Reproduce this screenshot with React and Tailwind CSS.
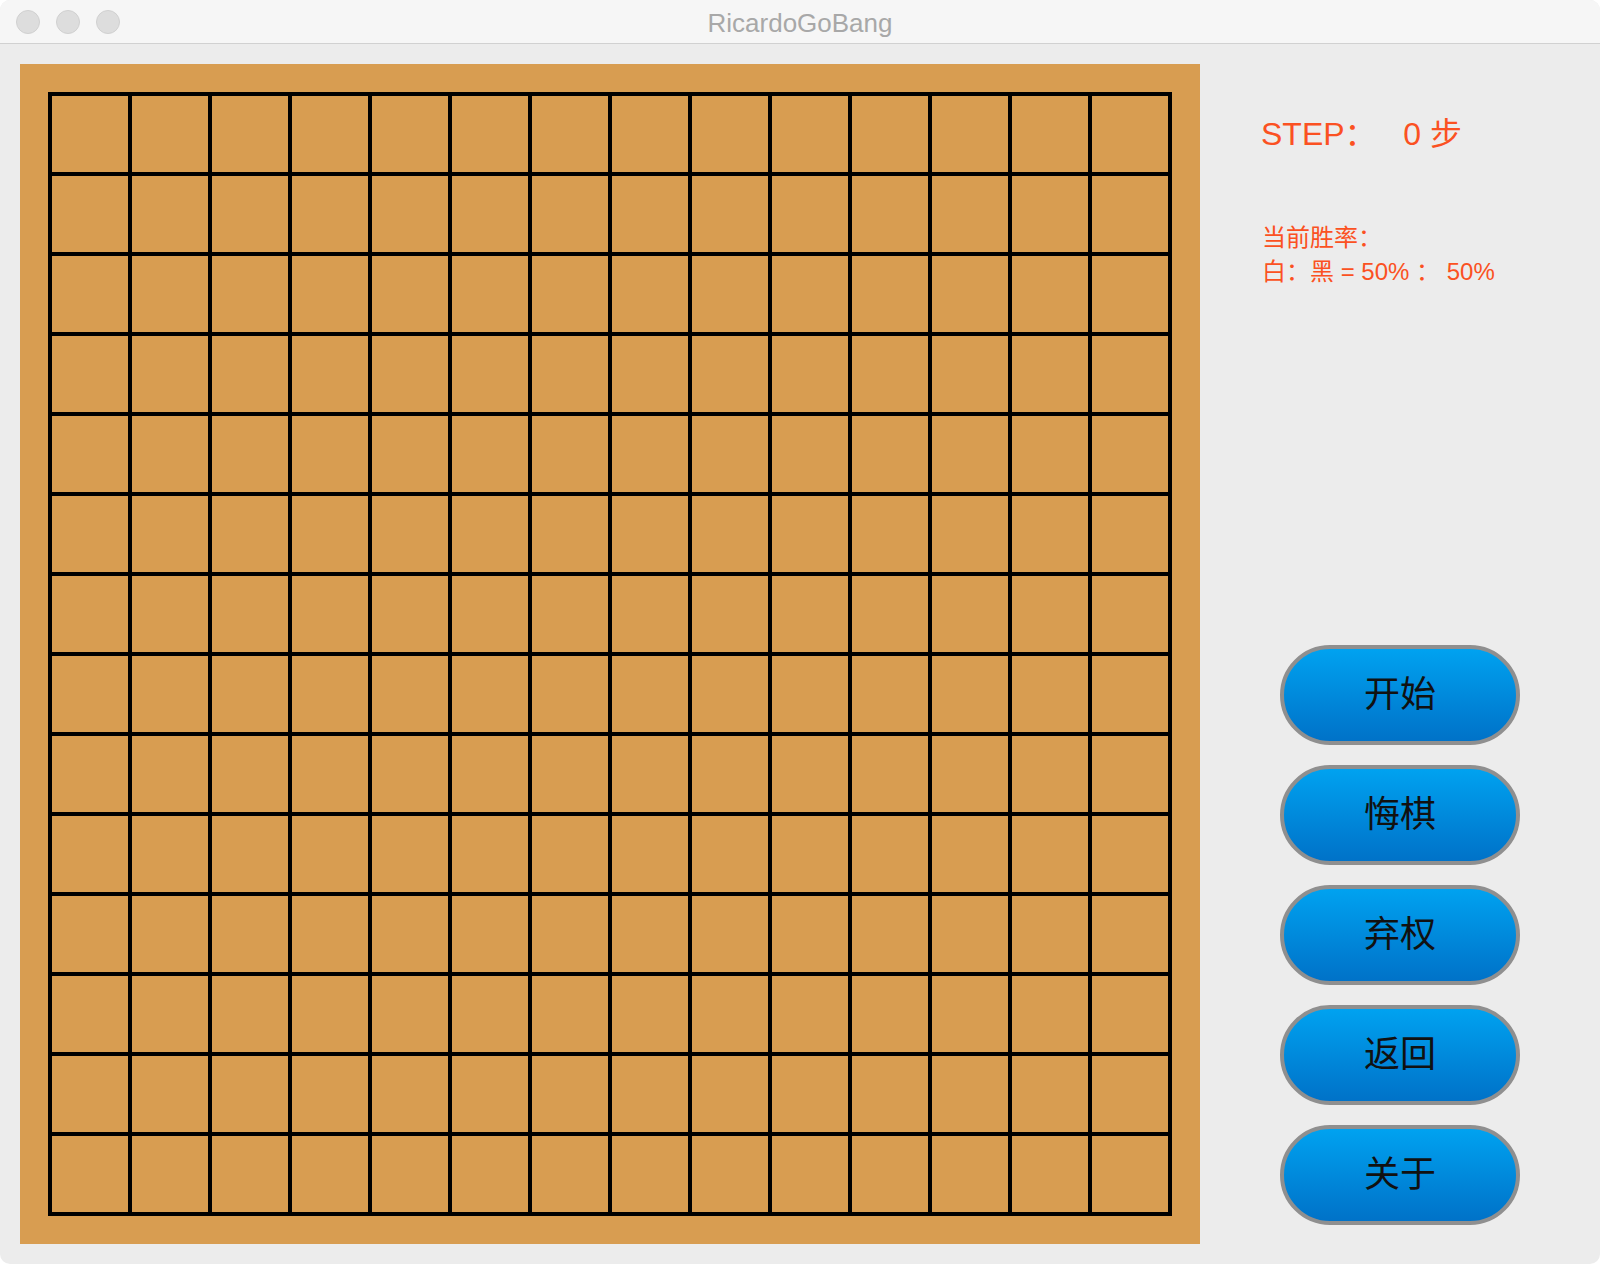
const CELLS = Array.from({ length: 14 * 14 });
const BUTTONS = ["开始", "悔棋", "弃权", "返回", "关于"];

export default function App() {
  return (
    <div className="h-[1264px] w-[1600px] bg-white font-['Liberation_Sans','Noto_Sans_CJK_SC',sans-serif]">
      <div className="flex h-full w-full flex-col overflow-hidden rounded-[10px] bg-[#ececec]">
        <TitleBar />
        <div className="flex flex-1">
          <Board />
          <SidePanel />
        </div>
      </div>
    </div>
  );
}

function TitleBar() {
  return (
    <div className="relative flex h-[44px] shrink-0 items-center justify-center border-b border-[#d1d1d1] bg-[#f6f6f6] pt-[3px]">
      <div className="absolute left-[16px] top-[10px] flex gap-[16px]">
        <span className="h-[24px] w-[24px] rounded-full border border-[#d0d0d0] bg-[#dddddd]" />
        <span className="h-[24px] w-[24px] rounded-full border border-[#d0d0d0] bg-[#dddddd]" />
        <span className="h-[24px] w-[24px] rounded-full border border-[#d0d0d0] bg-[#dddddd]" />
      </div>
      <span className="text-[26px] leading-none text-[#a8a8a8]">RicardoGoBang</span>
    </div>
  );
}

function Board() {
  return (
    <div className="ml-[20px] mt-[20px] h-[1180px] w-[1180px] bg-[#d89d51] p-[28px]">
      <div className="grid grid-cols-[repeat(14,76px)] gap-[4px] bg-black p-[4px]">
        {CELLS.map((_, i) => (
          <div key={i} className="h-[76px] w-[76px] bg-[#d89d51]" />
        ))}
      </div>
    </div>
  );
}

function SidePanel() {
  return (
    <div className="flex flex-1 flex-col text-[#fb5122]">
      <div className="mt-[70px] whitespace-pre pl-[61px] text-[32px] leading-[40px]">STEP：   0 步</div>
      <div className="mt-[67px] whitespace-pre pl-[62px] text-[24px] leading-[34px]">
        <div>当前胜率：</div>
        <div>白：黑 = 50% ： 50%</div>
      </div>
      <div className="mt-[356px] flex flex-col gap-[20px] pl-[80px]">
        {BUTTONS.map((label) => (
          <button
            key={label}
            type="button"
            className="flex h-[100px] w-[240px] items-center justify-center rounded-full border-[4px] border-[#8f8f8f] bg-gradient-to-b from-[#00a2f0] to-[#0072c8] text-[36px] text-[#111]"
          >
            {label}
          </button>
        ))}
      </div>
    </div>
  );
}
